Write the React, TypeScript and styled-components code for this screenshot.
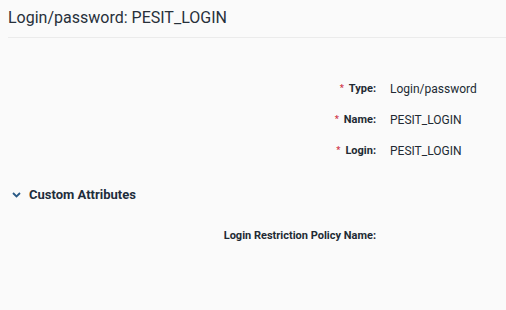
import styled, { createGlobalStyle } from "styled-components";
import { Fragment } from "react";

const Global = createGlobalStyle`
  html, body {
    margin: 0;
    padding: 0;
    background: #fafafa;
    font-family: Roboto, "Noto Sans", sans-serif;
  }
`;

const Page = styled.div`
  width: 506px;
  height: 310px;
  background: #fafafa;
  overflow: hidden;
`;

const Header = styled.div`
  margin: 0 0 0 8px;
  padding: 8px 0 9px 0;
  border-bottom: 1px solid #ebebeb;
`;

const Title = styled.h1`
  margin: 0;
  font-size: 16px;
  font-weight: 400;
  color: #27303a;
  line-height: 20px;
`;

const Fields = styled.div`
  display: grid;
  grid-template-columns: 376px 1fr;
  column-gap: 14px;
  row-gap: 15px;
  padding-top: 43px;
`;

const Label = styled.div`
  text-align: right;
  font-size: 11px;
  font-weight: 700;
  color: #222a33;
  line-height: 16px;
  height: 16px;
`;

const Star = styled.span`
  color: #d0364a;
  font-size: 9px;
  line-height: 0;
  margin-right: 5px;
  position: relative;
  top: -1px;
`;

const Value = styled.div`
  font-size: 12px;
  color: #222a33;
  line-height: 16px;
`;

const Section = styled.div`
  display: flex;
  align-items: center;
  gap: 8px;
  padding: 28px 0 0 12px;
`;

const SectionTitle = styled.span`
  font-size: 13px;
  font-weight: 700;
  color: #1e2d3c;
`;

const Attrs = styled(Fields)`
  padding-top: 26px;
`;

const rows = [
  { label: "Type:", value: "Login/password" },
  { label: "Name:", value: "PESIT_LOGIN" },
  { label: "Login:", value: "PESIT_LOGIN" },
];

export default function App() {
  return (
    <Page>
      <Global />
      <Header>
        <Title>Login/password: PESIT_LOGIN</Title>
      </Header>
      <Fields>
        {rows.map((r) => (
          <Fragment key={r.label}>
            <Label>
              <Star>*</Star>
              {r.label}
            </Label>
            <Value>{r.value}</Value>
          </Fragment>
        ))}
      </Fields>
      <Section>
        <svg width="9" height="6" viewBox="0 0 9 6">
          <path d="M1 1l3.5 3.5L8 1" fill="none" stroke="#2a5a86" strokeWidth="1.8" />
        </svg>
        <SectionTitle>Custom Attributes</SectionTitle>
      </Section>
      <Attrs>
        <Label>Login Restriction Policy Name:</Label>
        <Value></Value>
      </Attrs>
    </Page>
  );
}
